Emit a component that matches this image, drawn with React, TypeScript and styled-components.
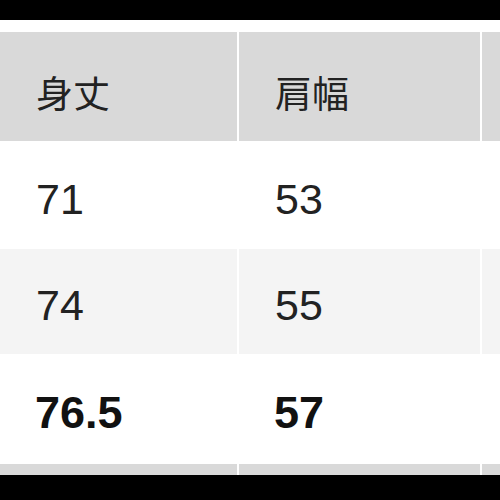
import React from "react";
import styled, { createGlobalStyle } from "styled-components";

const GlobalStyle = createGlobalStyle`
    html, body {
        margin: 0;
        padding: 0;
        background: #ffffff;
    }
    body {
        font-family: "Liberation Sans", "Noto Sans CJK JP", sans-serif;
        color: #1e1e1e;
    }
`

const Screen = styled.div`
    width: 500px;
    height: 500px;
    display: flex;
    flex-direction: column;
    overflow: hidden;
    background: #ffffff;
`

const Bar = styled.div<{ $h: number }>`
    flex: 0 0 ${p => p.$h}px;
    background: #000000;
`

const Viewport = styled.div`
    flex: 1 1 auto;
    padding-top: 12px;
    overflow: hidden;
`

const Table = styled.div`
    display: grid;
    grid-template-columns: 237px 241px 1fr;
    column-gap: 2px;
    row-gap: 1px;
    background: #ffffff;
`

const Cell = styled.div<{ $bg: string; $h: number; $bold?: boolean; $head?: boolean }>`
    height: ${p => p.$h}px;
    background: ${p => p.$bg};
    display: flex;
    align-items: center;
    padding-left: ${p => (p.$bold ? 35 : 36)}px;
    padding-top: ${p => (p.$head ? 10 : 8)}px;
    box-sizing: border-box;
    font-size: ${p => (p.$head ? 37 : p.$bold ? 45 : 43)}px;
    font-weight: ${p => (p.$bold ? 700 : 400)};
    font-family: ${p => (p.$head
        ? `"Noto Sans CJK JP", sans-serif`
        : `"Liberation Sans", "Noto Sans CJK JP", sans-serif`)};
    color: ${p => (p.$bold ? "#111111" : "#222222")};
    white-space: nowrap;
`

const rows = [
    { cells: ["身丈", "肩幅", ""], bg: "#d9d9d9", h: 109, head: true },
    { cells: ["71", "53", ""], bg: "#ffffff", h: 106 },
    { cells: ["74", "55", ""], bg: "#f4f4f4", h: 105 },
    { cells: ["76.5", "57", ""], bg: "#ffffff", h: 108, bold: true },
    { cells: ["", "", ""], bg: "#d9d9d9", h: 40 },
];

const App = () => {
    return <>
        <GlobalStyle />
        <Screen>
            <Bar $h={20} />
            <Viewport>
                <Table>
                    {rows.map((row, r) =>
                        row.cells.map((text, c) => (
                            <Cell
                                key={`${r}-${c}`}
                                $bg={row.bg}
                                $h={row.h}
                                $head={row.head}
                                $bold={row.bold}
                            >
                                {text}
                            </Cell>
                        ))
                    )}
                </Table>
            </Viewport>
            <Bar $h={25} />
        </Screen>
    </>
}

export default App;
